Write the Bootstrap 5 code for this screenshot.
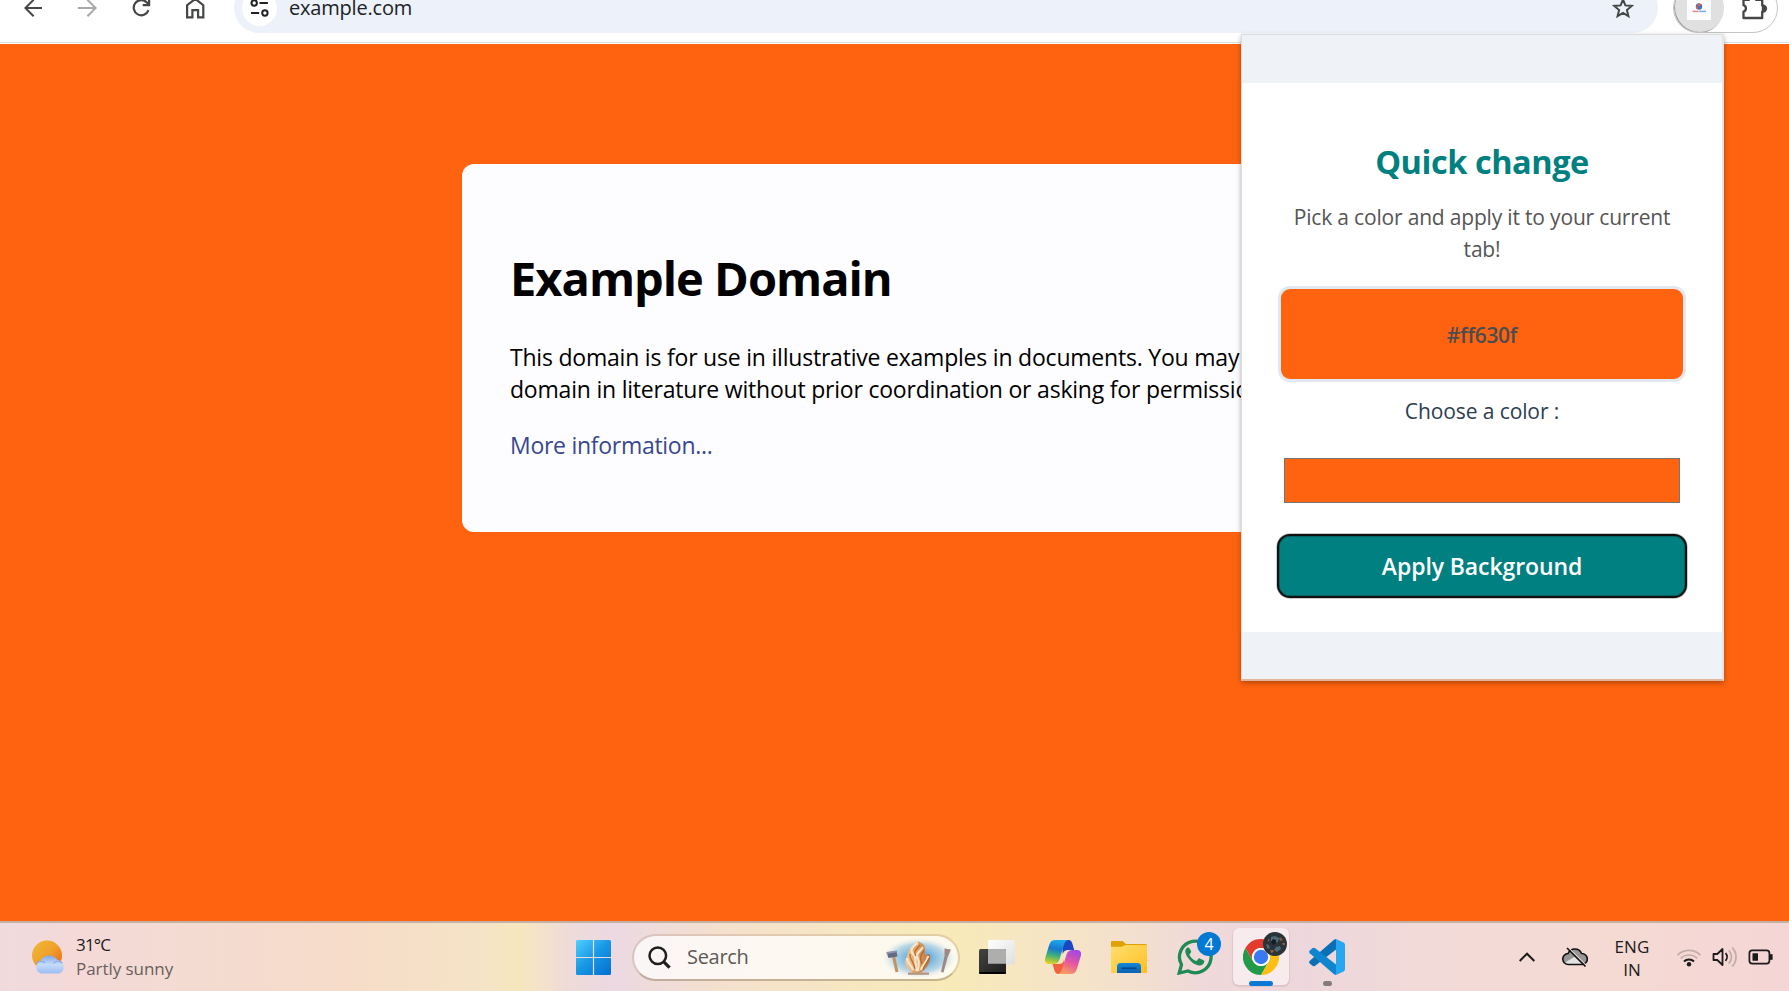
<!DOCTYPE html>
<html lang="en">
<head>
<meta charset="utf-8">
<title>Example Domain</title>
<link href="https://cdn.jsdelivr.net/npm/bootstrap@5.3.0/dist/css/bootstrap.min.css" rel="stylesheet">
<script src="https://cdn.jsdelivr.net/npm/bootstrap@5.3.0/dist/js/bootstrap.bundle.min.js"></script>
<style>
  :root { --page-bg: #ff630f; }
  body { width: 1789px; height: 991px; font-family: "Open Sans", "Noto Sans", sans-serif; background: var(--page-bg); color: #000; }
  svg { display: block; flex: none; }

  /* browser toolbar, scrolled half out of view */
  .browser-bar { height: 44px; border-bottom: 1px solid #fff; background: #fff; box-shadow: inset 0 -1px 0 #d9dce1; }
  .bar-row { height: 50px; margin-top: -17px; padding-left: 24px; padding-right: 11px; }
  .nav-icons { width: 210px; gap: 34px; }
  .omnibox { width: 1424px; height: 50px; border-radius: 25px; background: #ecf1fa; padding: 0 24px 0 8px; }
  .site-chip { width: 35px; height: 35px; background: #fff; }
  .address { margin: -1px 0 0 12px; font-size: 20px; line-height: 15px; letter-spacing: -.2px; color: #202226; }
  .ext-pill { width: 105px; height: 50px; border-radius: 25px; border: 1px solid #c4c4c4; margin-left: 15px; overflow: hidden; }
  .ext-active { width: 50px; height: 50px; margin: -1px 0 0 0; background: #e0e0e0; box-shadow: inset 1px -1px 0 #9c9c9c; }

  /* page card */
  .page-area { height: 877px; padding: 120px 0 0 462px; }
  .domain-card { width: 864px; height: 368px; border-radius: 12px; background: #fdfdff; padding: 82px 48px 0; }
  .domain-card h1 { font-size: 47px; line-height: 64px; font-weight: 700; letter-spacing: -1px; margin: 0 0 31px; }
  .domain-card p { font-size: 23px; line-height: 32px; letter-spacing: -.21px; margin: 0 0 24px; white-space: nowrap; }
  .domain-card a { color: #38488f; text-decoration: none; letter-spacing: -.28px; }

  /* extension popup */
  .ext-popup { left: 1241px; top: 34px; width: 483px; height: 647px; background: #eff3f8; border: 1px solid #dcdcdc; border-bottom: 2px solid #e2b59c; border-right: 2px solid #e9e5e4; padding: 48px 0; box-shadow: 0 2px 5px rgba(0,0,0,.3); z-index: 5; }
  .popup-body { height: 549px; background: #fff; padding: 57px 36px 0; text-align: center; }
  .popup-body h2 { font-size: 32.5px; line-height: 44px; font-weight: 700; letter-spacing: -.45px; color: #008080; margin: 0 0 17px; }
  .popup-body p { font-size: 21px; line-height: 32px; letter-spacing: -.18px; color: #555; margin: 0 0 21px; }
  .swatch { height: 96px; border: 3px solid #e2e8f0; border-radius: 12px; background: var(--page-bg); color: #4a4d50; font-size: 21px; font-weight: 600; letter-spacing: -.3px; padding-top: 3px; }
  .popup-body label { display: block; margin: 13px 0 0; font-size: 21px; line-height: 32px; letter-spacing: -.1px; color: #2c3e50; }
  .color-field { height: 45px; margin: 31px 6px 0; border: 1px solid #767676; background: var(--page-bg); }
  .btn-apply { width: 406px; height: 60px; margin-top: 33px; padding: 0; border: 0; border-radius: 11px; background: #008080 !important; color: #fff !important; font-size: 23px; font-weight: 600; line-height: 56px; letter-spacing: -.1px; box-shadow: inset 0 0 0 .5px #0b4747, 0 0 0 2px #101010, 0 0 0 2.7px #bbb; }

  /* taskbar */
  .taskbar { height: 70px; border-top: 2px solid #c1b1a6;
    background: linear-gradient(90deg, #efdbde 0, #f4d9d8 70px, #f4dbd3 170px, #f6dcc9 340px, #f5e3c6 480px, #f7e7be 520px, #eedbda 570px, #ecd9e2 615px, #f4e0cd 720px, #f7e7c2 850px, #f8eab8 950px, #f7e6c3 1030px, #f3dfcf 1140px, #efd9da 1200px, #eed7dc 1310px, #f2dad9 1410px, #f5dad3 1600px, #f5d6d6 1789px); }
  .weather { width: 544px; margin-left: 32px; gap: 10px; font-size: 17px; line-height: 24px; letter-spacing: -.05px; color: #1b1b1b; }
  .weather .temp { letter-spacing: -.8px; }
  .weather .sky { color: #685f5d; }
  .search-pill { width: 328px; height: 47px; margin: 0 4px 0 21px; border-radius: 24px; background: rgba(255,255,255,.74); background-clip: padding-box; border: 2px solid rgba(170,130,110,.26); border-bottom-color: rgba(130,105,80,.42); padding-left: 14px; font-size: 20px; letter-spacing: -.3px; color: #5c5956; }
  .search-art { margin-left: auto; }
  .task-slot { width: 66px; height: 68px; }
  .task-slot.active::before { content: ""; position: absolute; inset: 5px 5px 6px 5px; border-radius: 6px; background: #f7ebed; box-shadow: 0 1px 1px 1px rgba(150,110,120,.18); }
  .run-mark { bottom: 5px; left: 21px; width: 24px; height: 5px; border-radius: 3px; background: #0b78d4; }
  .run-mark.idle { left: 29px; width: 9px; background: #857a7c; }
  .count, .profile { left: 35px; top: 9px; width: 24px; height: 24px; }
  .count { background: #0078d4; color: #fff; font-size: 16px; line-height: 24px; }
  .tray { margin-right: 15px; }
  .tray .cloud { margin-left: 27px; }
  .lang { width: 36px; margin: 2px 26px 0; font-size: 17px; line-height: 23px; color: #1b1b1b; text-align: center; letter-spacing: .1px; }
  .status-icons { gap: 10px; }
</style>
</head>
<body class="overflow-hidden position-relative">

<header class="browser-bar d-flex">
  <div class="bar-row d-flex align-items-center">
    <div class="nav-icons d-flex align-items-center">
      <svg width="20" height="20" viewBox="0 0 20 20" fill="none" stroke="#454746" stroke-width="2"><path d="M18 10H2M9.6 1.8 1.4 10l8.2 8.2"/></svg>
      <svg width="20" height="20" viewBox="0 0 20 20" fill="none" stroke="#a9a9a9" stroke-width="2"><path d="M0 10h17M9.400 1.800l8.200 8.200-8.200 8.200"/></svg>
      <svg width="20" height="20" viewBox="0 0 20 20" fill="none" stroke="#454746" stroke-width="2.200"><path d="M16.500 12.200A7.600 7.600 0 1 1 14.800 4.400L17 7"/><path d="M17.100.8v6.400h-6.400"/></svg>
      <svg width="20" height="22" viewBox="0 0 20 22" fill="none" stroke="#454746" stroke-width="2.200"><path d="M1.100 20.400V8.200L9.300 1.900l8 6.300v12.200h-5.200v-7.200H6.400v7.200z"/></svg>
    </div>
    <div class="omnibox d-flex align-items-center">
      <div class="site-chip rounded-circle d-flex align-items-center justify-content-center">
        <svg width="20" height="18" viewBox="0 0 20 18" fill="none" stroke="#202124" stroke-width="2"><circle cx="4.200" cy="4" r="2.700"/><path d="M9.500 4h8.400M1 14h8.200"/><circle cx="14.900" cy="14" r="2.700"/></svg>
      </div>
      <span class="address">example.com</span>
      <svg class="ms-auto" width="22" height="22" viewBox="0 0 22 22" fill="none" stroke="#454746" stroke-width="2"><path d="m11 2.600 2.400 5.800 6.300.5-4.800 4.100 1.500 6.100L11 15.800l-5.400 3.300 1.500-6.100L2.300 8.900l6.300-.5z"/></svg>
    </div>
    <div class="ext-pill d-flex align-items-center">
      <div class="ext-active rounded-circle d-flex align-items-center justify-content-center">
        <svg width="24" height="24" viewBox="0 0 24 24"><path fill="#fcfcfc" d="M0 0h24v24H0z"/><circle cx="12" cy="10.500" r="3.200" fill="#4a6fc0"/><path fill="#e2653c" d="m12 7 2 2-2 1.500L10 9zM8.800 10.500l2 .5.600 2.200-2-.6z"/><path stroke="#ee8a86" stroke-width="1.500" d="M5.500 15.400h6"/><path stroke="#74b0e2" stroke-width="1.500" d="M12 15.400h7"/></svg>
      </div>
      <svg class="ms-3" width="28" height="26" viewBox="0 0 28 26" fill="none" stroke="#454746" stroke-width="2.300" stroke-linejoin="round"><path d="M3.500 4.800H9a3.600 3.600 0 0 1 7 0h6.200v5.600a3.200 3.200 0 0 1 0 6.200V23H3.500v-6.300a3.400 3.400 0 0 0 0-6.500z"/><path fill="#454746" d="M23 10.600a3 3 0 0 1 0 6z"/></svg>
    </div>
  </div>
</header>

<main class="page-area">
  <section class="domain-card">
    <h1>Example Domain</h1>
    <p>This domain is for use in illustrative examples in documents. You may use this<br>domain in literature without prior coordination or asking for permission.</p>
    <p><a href="#">More information...</a></p>
  </section>
</main>

<aside class="ext-popup position-absolute">
  <div class="popup-body">
    <h2>Quick change</h2>
    <p>Pick a color and apply it to your current<br>tab!</p>
    <div class="swatch d-flex align-items-center justify-content-center">#ff630f</div>
    <label>Choose a color :</label>
    <div class="color-field"></div>
    <button class="btn btn-apply">Apply Background</button>
  </div>
</aside>

<footer class="taskbar d-flex align-items-center">
  <div class="weather d-flex align-items-center">
    <svg width="34" height="34" viewBox="0 0 34 34">
      <defs>
        <linearGradient id="sun" x1="0" y1="0" x2="1" y2="1"><stop stop-color="#edbb35"/><stop offset=".5" stop-color="#f0a02c"/><stop offset="1" stop-color="#ee5a0c"/></linearGradient>
        <linearGradient id="cloud" x1="0" y1="0" x2="0" y2="1"><stop stop-color="#7fa8ec"/><stop offset=".5" stop-color="#c6dbf9"/><stop offset="1" stop-color="#9dbef2"/></linearGradient>
      </defs>
      <circle cx="15" cy="15.500" r="15" fill="url(#sun)"/>
      <path fill="url(#cloud)" d="M9 33.500a6.300 6.300 0 0 1-.6-12 9.500 9.500 0 0 1 17-1.400A6.900 6.900 0 0 1 27 33.500z"/>
      <path fill="none" stroke="#84a9ea" stroke-width="1.200" d="M3.800 24c2-3.400 7-3.600 9.300-.8M21.400 23.400c2.500-2.800 6.500-2.800 8.800-.4"/>
    </svg>
    <div><div class="temp">31°C</div><div class="sky">Partly sunny</div></div>
  </div>

  <svg width="35" height="35" viewBox="0 0 35 35">
    <defs><linearGradient id="win" gradientUnits="userSpaceOnUse" x1="0" y1="0" x2="32" y2="35"><stop stop-color="#4fd0ff"/><stop offset=".5" stop-color="#1898e4"/><stop offset="1" stop-color="#0472d2"/></linearGradient></defs>
    <path fill="url(#win)" d="M1.500 0H16.900v16.900H0V1.500Q0 0 1.500 0zM18.100 0h15.400Q35 0 35 1.500v15.400H18.100zM0 18.100h16.900V35H1.500Q0 35 0 33.500zM18.100 18.100H35v15.400q0 1.500-1.500 1.500H18.100z"/>
  </svg>

  <div class="search-pill d-flex align-items-center">
    <svg width="23" height="23" viewBox="0 0 23 23" fill="none" stroke="#1f1f1f" stroke-width="2.500"><circle cx="9.800" cy="9.800" r="8.300"/><path stroke-width="3.200" d="m15.800 15.800 5.800 5.800"/></svg>
    <span class="ms-3">Search</span>
    <svg class="search-art" width="82" height="43" viewBox="0 0 82 43">
      <defs>
        <radialGradient id="halo"><stop offset=".3" stop-color="#6fb0dc"/><stop offset=".68" stop-color="#a9cfe4" stop-opacity=".8"/><stop offset="1" stop-color="#fdf8ea" stop-opacity="0"/></radialGradient>
        <linearGradient id="wood" x1="0" x2="1"><stop stop-color="#f3c796"/><stop offset=".55" stop-color="#dd9c60"/><stop offset="1" stop-color="#b86c38"/></linearGradient>
      </defs>
      <ellipse cx="43" cy="22" rx="38" ry="21" fill="url(#halo)"/>
      <path stroke="#be9263" stroke-width="3" d="m17.500 20 3.500 16"/><path fill="#646b80" d="m10.500 16.500 10-1.500 1 5.500-9 1.500z"/><path fill="#8d93a8" d="m10.500 16 10-1.400.4 1.600-10 1.800z"/>
      <path fill="url(#wood)" d="M42 5.500c3 1 6 2.500 7 6.500 0 3-1 5 1 7 3-1 4-1 4 0 1 7-3 13-9 18H37c-7-5-9-10-7-15 1-2 2-4 2-7 2-4 7-5 10-9.500z"/>
      <path fill="none" stroke="#fbe6c8" stroke-width="2.200" d="M42 7c-8 5-8 8-4 12 3 4 0 10 3 16M47 11c-4 6-8 6-5 12 2 4 0 7 0 12M52 20c0 6-6 8-7 14M31 22c0 5 4 6 6 12"/>
      <path fill="none" stroke="#b0682f" stroke-width="1.200" d="M44 9c-4 5-7 6-4 11M48 15c-5 5-4 9-2 13M34 18c-1 5 4 7 5 15M53 22c-2 5-5 7-6 12"/>
      <path fill="#b7947f" d="M32 36.500h21v2.300H32z"/>
      <path fill="#9f8784" d="m68.500 12.500 6.500 1-3.500 8-4 15-2.500-.5 3.500-16z"/>
    </svg>
  </div>

  <div class="task-slot d-flex align-items-center justify-content-center">
    <svg width="36" height="34" viewBox="0 0 36 34">
      <defs><linearGradient id="tv" x1="0" y1="0" x2="1" y2="1"><stop stop-color="#444440"/><stop offset="1" stop-color="#1d1d1d"/></linearGradient><linearGradient id="tv2" x1="0" y1="0" x2="1" y2="1"><stop stop-color="#fff"/><stop offset="1" stop-color="#dedede"/></linearGradient></defs>
      <rect x="9" y="0" width="27" height="24.500" rx="1.500" fill="url(#tv2)"/><rect x="0" y="9" width="27" height="25" rx="1.500" fill="url(#tv)"/><path fill="#000" d="M0 32h27v.5q0 1.500-1.500 1.500h-24Q0 34 0 32.500z"/><path fill="#aeaeac" d="M9 9h16.500q1.500 0 1.500 1.500v13.200H9z"/>
    </svg>
  </div>
  <div class="task-slot d-flex align-items-center justify-content-center">
    <svg width="36" height="34" viewBox="0 0 36 34">
      <defs>
        <linearGradient id="cp1" x1=".4" y1="0" x2=".2" y2="1"><stop stop-color="#1ba6ec"/><stop offset=".35" stop-color="#1878cf"/><stop offset=".62" stop-color="#3db07c"/><stop offset="1" stop-color="#ecd21c"/></linearGradient>
        <linearGradient id="cp2" x1=".7" y1="0" x2=".3" y2="1"><stop stop-color="#a049e6"/><stop offset=".5" stop-color="#e5569f"/><stop offset="1" stop-color="#fba05a"/></linearGradient>
      </defs>
      <path fill="#1b47c4" d="M17 0h6.500c2.500 0 3.400 1.700 4 4l1.700 6h-6c-3 0-4.500 1.200-5.500 4z"/>
      <path fill="#f2603c" d="M19 34h-5.500c-2.500 0-3.600-1.700-4.200-4l-1.700-6H14c3 0 4.300-1.300 5-4z"/>
      <path fill="url(#cp1)" d="M9.500 0h14c-2.500.3-3.600 2-4.400 4.500l-4.600 15c-1 3-3 4.500-6 4.500H4c-3.600 0-4.700-3-3.800-6L4 5.500C5 2.200 6.500 0 9.500 0z"/>
      <path fill="url(#cp2)" d="M26.500 34h-14c2.500-.3 3.600-2 4.400-4.500l4.600-15c1-3 3-4.500 6-4.500H32c3.600 0 4.700 3 3.800 6L32 28.500c-1 3.300-2.500 5.500-5.500 5.500z"/>
    </svg>
  </div>
  <div class="task-slot d-flex align-items-center justify-content-center">
    <svg width="36" height="32" viewBox="0 0 36 32">
      <defs><linearGradient id="fd" x1="0" y1="0" x2="1" y2="1"><stop stop-color="#ffdf6e"/><stop offset="1" stop-color="#fdbf22"/></linearGradient><linearGradient id="fd2" x1="0" y1="0" x2="0" y2="1"><stop stop-color="#1688d8"/><stop offset="1" stop-color="#0a62b4"/></linearGradient></defs>
      <path fill="#e0a006" d="M1 0h10.500L15 3h19.500Q36 3 36 4.500V9H0V1q0-1 1-1z"/><path fill="url(#fd)" d="M0 5.700h10.500L15 4h20q1 0 1 1v26q0 1-1 1H1q-1 0-1-1z"/>
      <path fill="url(#fd2)" d="M6 32v-6.500Q6 22 9.500 22h17q3.500 0 3.500 3.500V32z"/><path stroke="#064a90" stroke-width="1.800" d="M10.500 27.300h15"/>
    </svg>
  </div>
  <div class="task-slot position-relative d-flex align-items-center justify-content-center">
    <svg width="36" height="36" viewBox="0 0 36 36" fill="none"><path stroke="#1f8a55" stroke-width="3.300" d="M2.200 34 4.500 25.700A15.800 15.800 0 1 1 11 32z"/><path fill="#1f8a55" d="M12.400 9.200c-.6-.9-1.300-.8-2.100-.4-3 1.800-2.300 5.500.3 9.400 3.500 5 7.500 8 12 8.300 2.200 0 4.400-1.400 4.700-4 .1-.8-.2-1-.8-1.300l-3.700-1.800c-.6-.2-1-.2-1.400.3L20 21.500c-.4.500-.8.500-1.400.2-2.900-1.300-4.500-3-6-5.500-.3-.5-.2-.9.2-1.300l1.200-1.600c.3-.4.2-.8 0-1.200z"/></svg>
    <span class="count position-absolute rounded-circle text-center">4</span>
  </div>
  <div class="task-slot active position-relative d-flex align-items-center justify-content-center">
    <svg class="position-relative" width="36" height="36" viewBox="0 0 36 36">
      <path fill="#e33b2e" d="M2.410 9A18 18 0 0 1 33.590 9H18a9 9 0 0 0-7.800 13.500z"/><path fill="#229a48" d="M2.410 9A18 18 0 0 0 18 36l7.800-13.500a9 9 0 0 1-15.600 0z"/><path fill="#fdc012" d="M33.590 9A18 18 0 0 1 18 36l7.800-13.500A9 9 0 0 0 18 9z"/><circle cx="18" cy="18" r="9" fill="#fff"/><circle cx="18" cy="18" r="7.200" fill="#3a7af0"/>
    </svg>
    <svg class="profile position-absolute" width="24" height="24" viewBox="0 0 24 24"><circle cx="12" cy="12" r="12" fill="#2a3338"/><path fill="#4e6a78" d="m8 5 4-1 4 2-1 4-4 1-3-2zM13 15l4-1 1 3-4 3-3-2zM3 12l3 1 1 4-3-1z"/><path fill="#8a5c40" d="m17 5 3 3-2 1-2-2zM7 18h3l1 2-3 1zM19 11h3v2h-2zM5 7l2 1-2 2z"/><path fill="#161d22" d="m10 7 3 1v3l-3 2-2-3z"/></svg>
    <span class="run-mark position-absolute"></span>
  </div>
  <div class="task-slot position-relative d-flex align-items-center justify-content-center">
    <svg width="36" height="36" viewBox="0 0 36 36"><path fill="#0a6fb5" d="M27 0v10.500L6.500 26.500q-1.800 1.300-3.400 0L.8 24.600q-1.400-1.400 0-2.800L25 .7z"/><path fill="#0d86cf" d="M27 36V25.500L6.500 9.500Q4.700 8.200 3.100 9.500L.8 11.400q-1.400 1.400 0 2.800L25 35.300z"/><path fill="#27a7f0" d="m27 0 7.600 3.600Q36 4.300 36 6v24q0 1.700-1.400 2.400L27 36z"/></svg>
    <span class="run-mark idle position-absolute"></span>
  </div>

  <div class="tray d-flex align-items-center ms-auto">
    <svg width="16" height="10" viewBox="0 0 16 10" fill="none" stroke="#1b1b1b" stroke-width="2"><path d="m.7 9 7.300-7.300L15.300 9"/></svg>
    <svg class="cloud" width="26" height="20" viewBox="0 0 26 20"><path fill="#969696" d="M6.500 17.500a5.500 5.500 0 0 1-.4-11 7.300 7.300 0 0 1 13.500 0 5.500 5.500 0 0 1 .4 11z"/><path fill="#e2e0e0" d="m3 15.500 10-6 8 8H6z"/><path fill="none" stroke="#111" stroke-width="1.600" d="M6.500 17.500a5.500 5.500 0 0 1-.4-11 7.300 7.300 0 0 1 13.500 0 5.500 5.500 0 0 1 .4 11z"/><path stroke="#f4dad4" stroke-width="1.200" d="m6.400.6 18 18"/><path stroke="#111" stroke-width="1.600" d="m5 1 18.500 18.500"/></svg>
    <div class="lang">ENG<br>IN</div>
    <div class="status-icons d-flex align-items-center">
      <svg width="26" height="20" viewBox="0 0 26 20" fill="none" stroke-width="1.700"><g stroke="#c2adaa"><path d="M1.500 8.200a16.200 16.200 0 0 1 23 0M4.800 11.400a11.600 11.600 0 0 1 16.400 0"/></g><path stroke="#1b1b1b" stroke-width="2" d="M8 14.500a7 7 0 0 1 10 0"/><circle cx="13" cy="17.300" r="2.200" fill="#1b1b1b"/></svg>
      <svg width="26" height="20" viewBox="0 0 26 20" fill="none" stroke="#1b1b1b" stroke-width="1.800" stroke-linejoin="round"><path d="M1.500 7h3.800l5.200-5v16l-5.200-5H1.500zM13.500 6.200a5.500 5.500 0 0 1 0 7.600"/><path stroke="#c2adaa" d="M16.800 3.400a9.500 9.500 0 0 1 0 13.200M20.200.6a13.500 13.500 0 0 1 0 18.800"/></svg>
      <svg width="26" height="16" viewBox="0 0 26 16" fill="none" stroke="#1b1b1b" stroke-width="1.700"><rect x="1.400" y="1.400" width="20" height="13.200" rx="2.800"/><rect x="4.500" y="4.200" width="5.500" height="7.600" rx=".6" fill="#1b1b1b" stroke="none"/><path stroke-width="2.600" d="M23.300 5.200v5.600"/></svg>
    </div>
  </div>
</footer>
</body>
</html>
